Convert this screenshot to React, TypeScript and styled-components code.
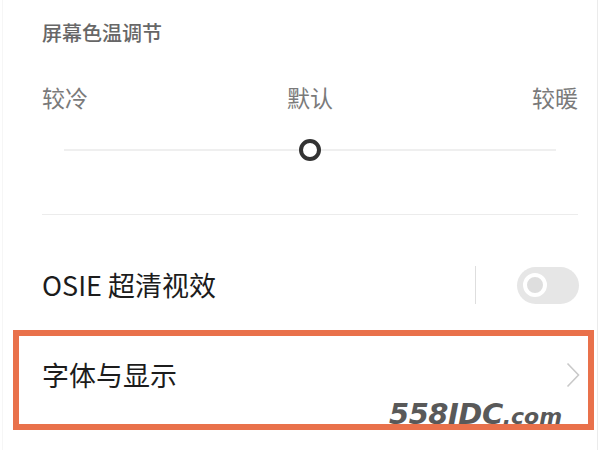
import styled, { createGlobalStyle } from 'styled-components'

const GlobalStyle = createGlobalStyle`
  html, body {
    margin: 0;
    padding: 0;
    background: #ffffff;
  }
  body {
    font-family: "Noto Sans CJK SC", "Noto Sans", sans-serif;
  }
`

export default function App() {
  return (
    <>
      <GlobalStyle />
      <Screen>
        <Section>
          <Title>屏幕色温调节</Title>
          <Labels>
            <Label>较冷</Label>
            <Label>默认</Label>
            <Label>较暖</Label>
          </Labels>
          <Slider>
            <Track />
            <Thumb />
            <Track />
          </Slider>
          <Divider />
        </Section>

        <SettingRow>
          <RowText>OSIE 超清视效</RowText>
          <RowControls>
            <Separator />
            <Toggle>
              <Knob />
            </Toggle>
          </RowControls>
        </SettingRow>

        <HighlightRow>
          <RowText>字体与显示</RowText>
          <svg width="14" height="26" viewBox="0 0 14 26">
            <polyline points="1.5,1.5 12.5,13 1.5,24.5" fill="none" stroke="#c9c9c9" strokeWidth="1.6" />
          </svg>
          <Watermark>
            558IDC<small>.com</small>
          </Watermark>
        </HighlightRow>

        <Section>
          <Divider />
        </Section>
      </Screen>
    </>
  )
}

const Screen = styled.div`
  width: 594px;
  height: 450px;
  margin-left: 2px;
  border-left: 1px solid #f6f6f6;
  border-right: 1px solid #ebebeb;
  overflow: hidden;
`

const Section = styled.div`
  padding: 0 19px 0 39px;
`

const Title = styled.div`
  padding-top: 20px;
  font-size: 20px;
  line-height: 25px;
  font-weight: 500;
  color: #676767;
`

const Labels = styled.div`
  display: flex;
  justify-content: space-between;
  margin-top: 37px;
`

const Label = styled.span`
  font-size: 23px;
  line-height: 30px;
  color: #7a7a7a;
`

const Slider = styled.div`
  display: flex;
  align-items: center;
  height: 24px;
  margin: 26px 22px 0;
`

const Track = styled.div`
  flex: 1;
  height: 2px;
  background: #efefef;
`

const Thumb = styled.div`
  width: 22px;
  height: 22px;
  box-sizing: border-box;
  border: 4px solid #333333;
  border-radius: 50%;
  background: #ffffff;
`

const Divider = styled.div`
  height: 1px;
  background: #ececec;
  margin-top: 52px;
`

const SettingRow = styled.div`
  display: flex;
  align-items: center;
  justify-content: space-between;
  height: 115px;
  padding: 25px 18px 0 39px;
  box-sizing: border-box;
`

const RowText = styled.span`
  font-size: 27px;
  line-height: 36px;
  color: #1c1c1c;
`

const RowControls = styled.div`
  display: flex;
  align-items: center;
  gap: 41px;
`

const Separator = styled.div`
  width: 1px;
  height: 38px;
  background: #dedede;
`

const Toggle = styled.div`
  display: flex;
  align-items: center;
  width: 62px;
  height: 37px;
  padding-left: 6px;
  box-sizing: border-box;
  border-radius: 19px;
  background: #e6e6e6;
`

const Knob = styled.div`
  width: 24px;
  height: 24px;
  box-sizing: border-box;
  border: 4px solid #ffffff;
  border-radius: 50%;
  background: #dedede;
`

const HighlightRow = styled.div`
  position: relative;
  display: flex;
  align-items: center;
  justify-content: space-between;
  height: 100px;
  margin: 0 3px 0 10px;
  padding: 0 8px 10px 23px;
  box-sizing: border-box;
  border: 6px solid #e9714b;
`

const Watermark = styled.div`
  position: absolute;
  left: 370px;
  top: 62px;
  font-family: "DejaVu Sans", sans-serif;
  font-size: 29px;
  line-height: 32px;
  font-weight: 700;
  font-style: italic;
  color: #595959;
  letter-spacing: -0.5px;

  small {
    font-size: 22px;
    letter-spacing: 0;
  }
`
